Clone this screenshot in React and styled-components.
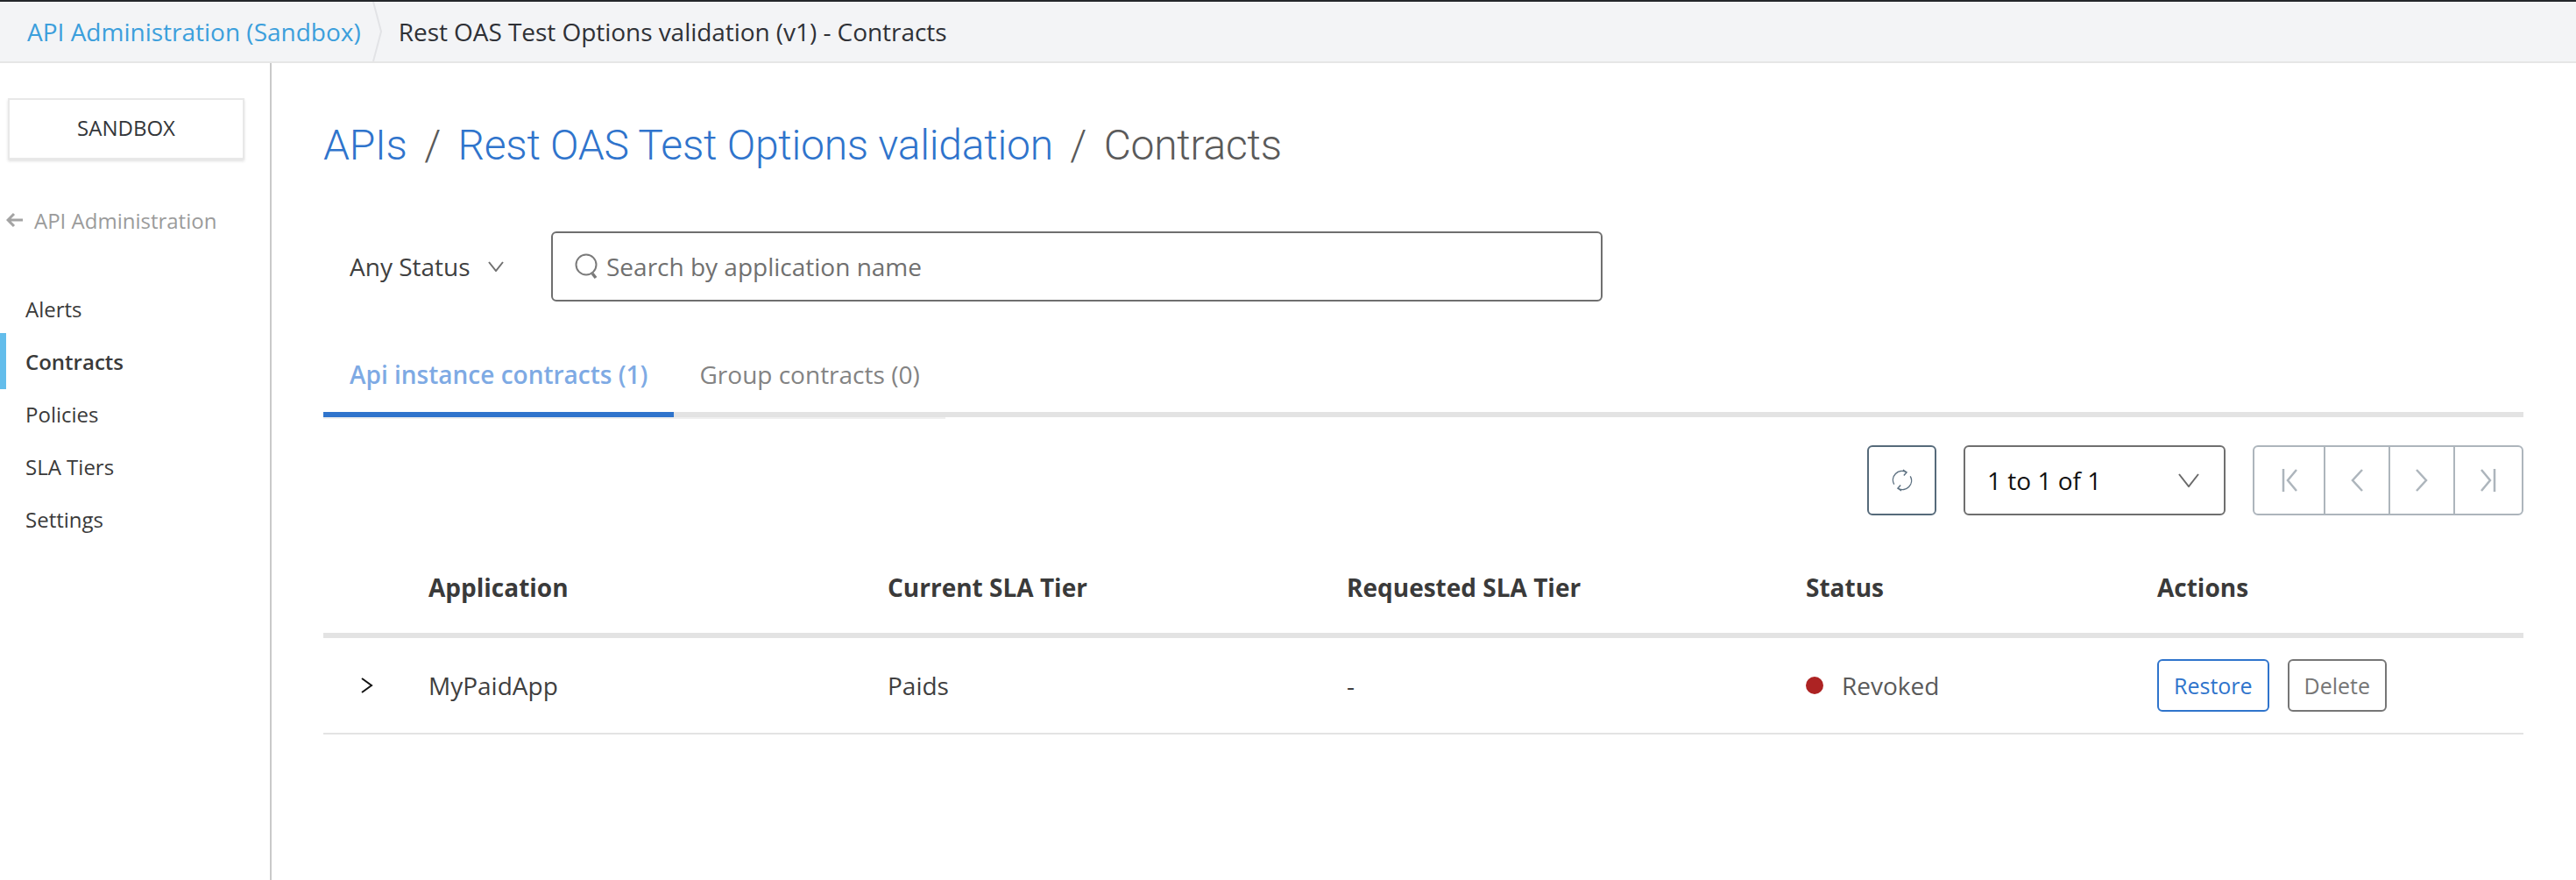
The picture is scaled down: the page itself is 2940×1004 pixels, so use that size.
import React from "react";
import styled, { createGlobalStyle } from "styled-components";

const Global = createGlobalStyle`
  html, body { margin: 0; padding: 0; background: #fff; }
  body { font-family: "Open Sans", "Liberation Sans", sans-serif; color: #3a3a3a; }
  * { box-sizing: border-box; }
`;

const Page = styled.div`
  width: 2940px;
  height: 1004px;
  display: flex;
  flex-direction: column;
  overflow: hidden;
`;
const TopBar = styled.header`
  height: 72px;
  flex: none;
  display: flex;
  align-items: center;
  background: #f3f4f6;
  border-top: 2px solid #24272b;
  border-bottom: 2px solid #e6e6e6;
  padding-left: 31px;
  font-size: 28px;
`;
const CrumbLink = styled.span`
  color: #3c9fdc;
`;
const CrumbSep = styled.svg`
  width: 12px;
  height: 68px;
  margin: 0 18px 0 13px;
  flex: none;
`;
const CrumbCurrent = styled.span`
  color: #2f3136;
  letter-spacing: -0.05px;
`;
const Body = styled.div`
  flex: 1;
  display: flex;
  min-height: 0;
`;
const Side = styled.nav`
  width: 310px;
  flex: none;
  border-right: 2px solid #c9c9c9;
  padding-top: 40px;
`;
const EnvBox = styled.div`
  width: 270px;
  height: 70px;
  margin-left: 9px;
  padding-bottom: 3px;
  display: flex;
  align-items: center;
  justify-content: center;
  border: 2px solid #e8e8e8;
  box-shadow: 0 2px 3px rgba(0, 0, 0, 0.12);
  font-size: 24px;
  color: #33363a;
`;
const BackLink = styled.div`
  margin: 49px 0 0 7px;
  height: 40px;
  display: flex;
  align-items: center;
  gap: 13px;
  font-size: 24px;
  color: #9b9b9b;
`;
const NavList = styled.div`
  margin-top: 51px;
  display: flex;
  flex-direction: column;
`;
const NavItem = styled.div`
  position: relative;
  height: 60px;
  display: flex;
  align-items: center;
  padding-left: 29px;
  font-size: 24px;
  font-weight: ${p => (p.$active ? 600 : 400)};
  color: #3a3a3a;
  ${p => p.$active && `
    &::before {
      content: "";
      position: absolute;
      left: 0;
      top: -2px;
      width: 7px;
      height: 64px;
      background: #63bdeb;
    }
  `}
`;
const Main = styled.main`
  flex: 1;
  min-width: 0;
  padding: 47px 60px 0 59px;
`;
const Heading = styled.h1`
  margin: 11px 0 0;
  height: 70px;
  display: flex;
  align-items: center;
  font-family: Roboto, "Liberation Sans", sans-serif;
  font-weight: 300;
  font-size: 48px;
  letter-spacing: -0.25px;
  color: #5a5a5a;
`;
const HeadLink = styled.span`
  color: #2f74cc;
`;
const HeadSep = styled.span`
  margin: 0 19.5px;
  color: #5a5a5a;
`;
const FilterRow = styled.div`
  margin-top: 64px;
  display: flex;
  align-items: center;
`;
const StatusSelect = styled.div`
  width: 260px;
  padding-left: 30px;
  display: flex;
  align-items: center;
  gap: 20px;
  font-size: 28px;
  color: #3f3f3f;
`;
const SearchBox = styled.div`
  width: 1200px;
  height: 80px;
  border: 2px solid #6f6f6f;
  border-radius: 6px;
  display: flex;
  align-items: center;
  padding-left: 25px;
  gap: 9px;
  font-size: 28px;
  color: #707070;
`;
const Tabs = styled.div`
  position: relative;
  margin-top: 34px;
  height: 98px;
  display: flex;
  gap: 59px;
  padding: 30px 0 0 30px;
  border-bottom: 6px solid #e3e3e3;
`;
const TabLight = styled.div`
  position: absolute;
  left: 0;
  bottom: -8px;
  width: 710px;
  height: 2px;
  background: #efefef;
`;
const TabActive = styled.div`
  position: absolute;
  left: 0;
  bottom: -6px;
  width: 400px;
  height: 6px;
  background: #2f74cc;
`;
const Tab = styled.div`
  font-size: 28px;
  font-weight: ${p => (p.$active ? 600 : 400)};
  color: ${p => (p.$active ? "#7eaae4" : "#838383")};
`;
const Toolbar = styled.div`
  margin-top: 32px;
  display: flex;
  justify-content: flex-end;
  align-items: center;
`;
const RefreshButton = styled.div`
  width: 79px;
  height: 80px;
  border: 2px solid #566a7a;
  border-radius: 6px;
  display: flex;
  align-items: center;
  justify-content: center;
`;
const PageSelect = styled.div`
  width: 299px;
  height: 80px;
  margin-left: 31px;
  border: 2px solid #6f6f6f;
  border-radius: 6px;
  display: flex;
  align-items: center;
  justify-content: space-between;
  padding: 0 28px 0 25px;
  font-size: 28px;
  color: #111;
`;
const Pager = styled.div`
  width: 309px;
  height: 80px;
  margin-left: 31px;
  border: 2px solid #adb5bc;
  border-radius: 6px;
  display: grid;
  grid-template-columns: 79px 74px 74px 1fr;
`;
const PagerCell = styled.div`
  display: flex;
  align-items: center;
  justify-content: center;
  & + & { border-left: 2px solid #adb5bc; }
`;
const columns = "120px 524px 524px 524px 401px 1fr";
const HeaderRow = styled.div`
  margin-top: 48px;
  height: 92px;
  display: grid;
  grid-template-columns: ${columns};
  align-items: center;
  padding-bottom: 18px;
  border-bottom: 6px solid #e3e3e3;
  font-size: 28px;
  font-weight: 700;
  color: #3a3a3a;
`;
const DataRow = styled.div`
  height: 110px;
  display: grid;
  grid-template-columns: ${columns};
  align-items: center;
  border-bottom: 2px solid #e3e3e3;
  font-size: 28px;
  color: #3f3f3f;
`;
const Expander = styled.div`
  padding-left: 43px;
  display: flex;
`;
const StatusCell = styled.div`
  display: flex;
  align-items: center;
  gap: 21px;
  color: #5a5a5a;
`;
const Dot = styled.span`
  width: 20px;
  height: 20px;
  border-radius: 50%;
  background: #ad2323;
`;
const Actions = styled.div`
  display: flex;
  gap: 21px;
`;
const ActionButton = styled.div`
  height: 60px;
  padding: 0 17px;
  display: flex;
  align-items: center;
  border: 2px solid ${p => (p.$primary ? "#2f74cc" : "#767676")};
  border-radius: 6px;
  font-size: 25px;
  color: ${p => (p.$primary ? "#2f74cc" : "#767676")};
`;

const Stroke = ({ w, h, color = "#707070", sw = 2, d, vb }) => (
  <svg width={w} height={h} viewBox={vb || `0 0 ${w} ${h}`} fill="none" stroke={color} strokeWidth={sw}>
    <path d={d} />
  </svg>
);

export default function App() {
  return (
    <Page>
      <Global />
      <TopBar>
        <CrumbLink>API Administration (Sandbox)</CrumbLink>
        <CrumbSep viewBox="0 0 12 68" fill="none" stroke="#e2e3e6" strokeWidth="2">
          <path d="M1 0 L10 34 L1 68" />
        </CrumbSep>
        <CrumbCurrent>Rest OAS Test Options validation (v1) - Contracts</CrumbCurrent>
      </TopBar>
      <Body>
        <Side>
          <EnvBox>SANDBOX</EnvBox>
          <BackLink>
            <Stroke w={19} h={18} color="#a3a3a3" sw={3} d="M19 9 H2 M9 2 L2 9 L9 16" />
            API Administration
          </BackLink>
          <NavList>
            <NavItem>Alerts</NavItem>
            <NavItem $active>Contracts</NavItem>
            <NavItem>Policies</NavItem>
            <NavItem>SLA Tiers</NavItem>
            <NavItem>Settings</NavItem>
          </NavList>
        </Side>
        <Main>
          <Heading>
            <HeadLink>APIs</HeadLink>
            <HeadSep>/</HeadSep>
            <HeadLink>Rest OAS Test Options validation</HeadLink>
            <HeadSep>/</HeadSep>
            Contracts
          </Heading>
          <FilterRow>
            <StatusSelect>
              Any Status
              <Stroke w={18} h={12} color="#707070" d="M1 1 L9 11 L17 1" />
            </StatusSelect>
            <SearchBox>
              <svg width="27" height="30" viewBox="0 0 27 30" fill="none" stroke="#7a7a7a" strokeWidth="2">
                <circle cx="13" cy="13" r="11.5" />
                <path d="M20 23 L24 28" strokeWidth="3.5" />
              </svg>
              Search by application name
            </SearchBox>
          </FilterRow>
          <Tabs>
            <Tab $active>Api instance contracts (1)</Tab>
            <Tab>Group contracts (0)</Tab>
            <TabLight />
            <TabActive />
          </Tabs>
          <Toolbar>
            <RefreshButton>
              <svg width="24" height="28" viewBox="0 0 26 28" fill="none" stroke="#5c7080" strokeWidth="1.5">
                <path d="M3 19 A11 11 0 0 1 18 4 M14 1 L18.5 4 L15 8" />
                <path d="M23 9 A11 11 0 0 1 8 24 M12 27 L7.5 24 L11 20" />
              </svg>
            </RefreshButton>
            <PageSelect>
              1 to 1 of 1
              <Stroke w={24} h={16} color="#6a6a6a" d="M1 1 L12 15 L23 1" />
            </PageSelect>
            <Pager>
              <PagerCell><Stroke w={18} h={26} color="#adb5bc" sw={2.5} d="M2 0 V26 M17 1 L7 13 L17 25" /></PagerCell>
              <PagerCell><Stroke w={14} h={26} color="#adb5bc" sw={2.5} d="M13 1 L2 13 L13 25" /></PagerCell>
              <PagerCell><Stroke w={14} h={26} color="#adb5bc" sw={2.5} d="M1 1 L12 13 L1 25" /></PagerCell>
              <PagerCell><Stroke w={18} h={26} color="#adb5bc" sw={2.5} d="M16 0 V26 M1 1 L11 13 L1 25" /></PagerCell>
            </Pager>
          </Toolbar>
          <HeaderRow>
            <span />
            <span>Application</span>
            <span>Current SLA Tier</span>
            <span>Requested SLA Tier</span>
            <span>Status</span>
            <span>Actions</span>
          </HeaderRow>
          <DataRow>
            <Expander>
              <Stroke w={14} h={18} color="#111" d="M1 1 L12 9 L1 17" />
            </Expander>
            <span>MyPaidApp</span>
            <span>Paids</span>
            <span>-</span>
            <StatusCell><Dot />Revoked</StatusCell>
            <Actions>
              <ActionButton $primary>Restore</ActionButton>
              <ActionButton>Delete</ActionButton>
            </Actions>
          </DataRow>
        </Main>
      </Body>
    </Page>
  );
}
